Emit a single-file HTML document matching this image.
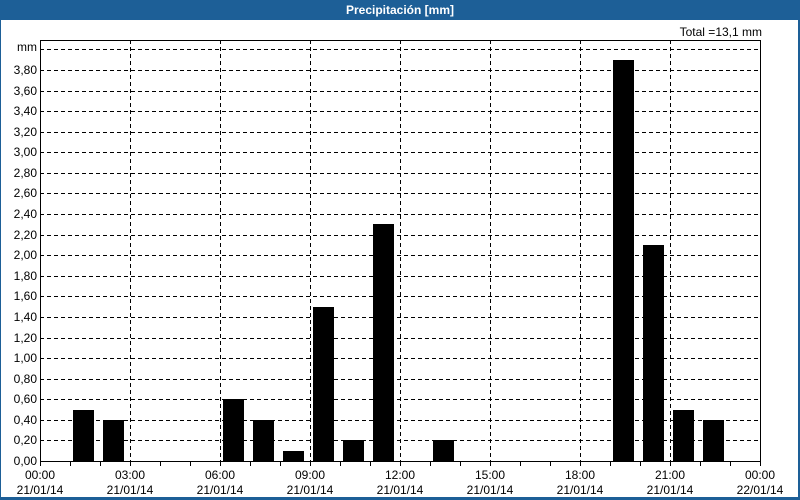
<!DOCTYPE html>
<html><head><meta charset="utf-8"><style>
html,body{margin:0;padding:0;background:#fff;}
svg{display:block;font-family:"Liberation Sans",sans-serif;font-size:12px;}
</style></head><body>
<svg width="800" height="500" viewBox="0 0 800 500" xmlns="http://www.w3.org/2000/svg">
<rect x="0" y="0" width="800" height="500" fill="#1d5f97"/>
<rect x="1" y="20" width="797" height="477" fill="#fff"/>
<text x="400" y="14" fill="#fff" font-weight="bold" text-anchor="middle">Precipitación [mm]</text>
<text x="762" y="36" fill="#000" text-anchor="end">Total =13,1 mm</text>
<g id="grid" stroke="#000" stroke-width="1" stroke-dasharray="4,3" fill="none"></g>
<g id="bars" fill="#000"></g>
<g id="axis" stroke="#000" fill="none"></g>
<g id="labels" fill="#000"></g>
</svg>
<script>
var ns="http://www.w3.org/2000/svg";
function el(p,t,a,txt){var e=document.createElementNS(ns,t);for(var k in a)e.setAttribute(k,a[k]);if(txt)e.textContent=txt;document.getElementById(p).appendChild(e);}
var s=102.9,b=461;
for(var i=1;i<=20;i++){var y=Math.round(b-i*0.2*s)+0.5;el('grid','line',{x1:40,x2:760,y1:y,y2:y});}
for(var j=1;j<8;j++){var x=40+j*90+0.5;el('grid','line',{x1:x,x2:x,y1:40,y2:461});}
var d=[[1,.5],[2,.4],[6,.6],[7,.4],[8,.1],[9,1.5],[10,.2],[11,2.3],[13,.2],[19,3.9],[20,2.1],[21,.5],[22,.4]];
d.forEach(function(v){var h=Math.round(v[1]*s);el('bars','rect',{x:40+v[0]*30+3,y:b-h,width:21,height:h});});
el('axis','rect',{x:40.5,y:40.5,width:720,height:421});
for(var k=0;k<=24;k++){var x=40+k*30+0.5;el('axis','line',{x1:x,x2:x,y1:461,y2:466});}
for(var i=0;i<=19;i++){var y=Math.round(b-i*0.2*s);el('labels','text',{x:37,y:y+4,'text-anchor':'end'},(i*0.2).toFixed(2).replace('.',','));}
el('labels','text',{x:37,y:51,'text-anchor':'end'},'mm');
var t=['00:00','03:00','06:00','09:00','12:00','15:00','18:00','21:00','00:00'];
for(var j=0;j<=8;j++){var x=40+j*90;el('labels','text',{x:x,y:479,'text-anchor':'middle'},t[j]);el('labels','text',{x:x,y:494,'text-anchor':'middle'},j==8?'22/01/14':'21/01/14');}
</script>
</body></html>
